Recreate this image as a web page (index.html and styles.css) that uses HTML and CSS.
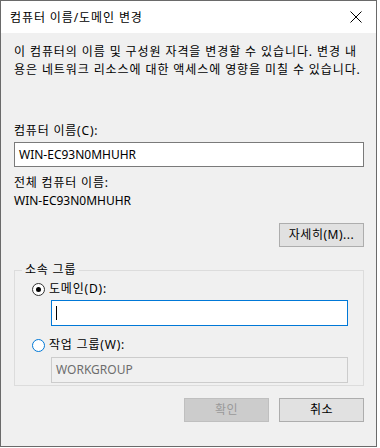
FILE: index.html
```html
<!DOCTYPE html>
<html lang="ko">
<head>
  <meta charset="UTF-8">
  <title>컴퓨터 이름/도메인 변경</title>
  <link rel="stylesheet" href="styles.css">
</head>
<body>

<div class="window">
  <div class="titlebar">
    <span class="title">컴퓨터 이름/도메인 변경</span>
    <svg class="close" width="12" height="12" viewBox="0 0 12 12">
      <path d="M0.5 0.5 L11.5 11.5 M11.5 0.5 L0.5 11.5" stroke="#000" stroke-width="1" fill="none"/>
    </svg>
  </div>

  <div class="content">
    <p class="desc">이 컴퓨터의 이름 및 구성원 자격을 변경할 수 있습니다. 변경 내<br>용은 네트워크 리소스에 대한 액세스에 영향을 미칠 수 있습니다.</p>

    <div class="label name-label">컴퓨터 이름(C):</div>
    <div class="textbox latin">WIN-EC93N0MHUHR</div>

    <div class="label full-label">전체 컴퓨터 이름:</div>
    <div class="label latin">WIN-EC93N0MHUHR</div>

    <div class="row-right more-row">
      <div class="btn">자세히(M)...</div>
    </div>

    <fieldset class="group">
      <legend>소속 그룹</legend>
      <div class="radio-row">
        <span class="radio checked"></span>
        <span>도메인(D):</span>
      </div>
      <div class="textbox sub focus"><span class="caret"></span></div>
      <div class="radio-row second">
        <span class="radio hover"></span>
        <span>작업 그룹(W):</span>
      </div>
      <div class="textbox sub disabled latin">WORKGROUP</div>
    </fieldset>

    <div class="row-right footer">
      <div class="btn off">확인</div>
      <div class="btn">취소</div>
    </div>
  </div>
</div>

</body>
</html>
```

FILE: styles.css
```css
/* Base */
body {
  margin: 0;
  background: #ffffff;
  font-family: "Noto Sans", "Noto Sans CJK KR", sans-serif;
  font-size: 12px;
  letter-spacing: 0.8px;
  color: #000;
}

.latin {
  letter-spacing: 0;
}

.window {
  width: 375px;
  height: 445px;
  border: 1px solid #6a6a6a;
  background: #f0f0f0;
  display: flex;
  flex-direction: column;
}

.titlebar {
  height: 32px;
  background: #ffffff;
  display: flex;
  align-items: center;
  justify-content: space-between;
  padding: 0 9px 0 9px;
}

.title {
  font-size: 12px;
  line-height: 16px;
  margin-top: 1px;
  letter-spacing: 0.9px;
}

.close {
  margin-right: 5px;
}

.content {
  padding: 10px 12px 0 13px;
}

.desc {
  margin: 0;
  line-height: 18px;
  letter-spacing: 0.9px;
}

.label {
  line-height: 18px;
}

.name-label {
  margin-top: 43px;
}

.textbox {
  height: 23px;
  border: 1px solid #7a7a7a;
  background: #fff;
  line-height: 23px;
  padding-left: 4px;
  margin-top: 2px;
}

.full-label {
  margin-top: 7px;
}

.row-right {
  display: flex;
  justify-content: flex-end;
  gap: 10px;
}

.more-row {
  margin-top: 13px;
}

.btn {
  width: 83px;
  height: 22px;
  border: 1px solid #adadad;
  background: #e1e1e1;
  line-height: 22px;
  text-align: center;
  letter-spacing: 0.5px;
}

.btn.off {
  background: #cccccc;
  border-color: #bfbfbf;
  color: #9a9a9a;
}

/* Group box */
.group {
  margin: 14px 0 0 0;
  padding: 0 15px 13px 36px;
  border: 1px solid #dcdcdc;
  height: 110px;
}

.group legend {
  padding: 0 3px;
  margin-left: -29px;
  line-height: 18px;
}

.radio-row {
  display: flex;
  align-items: center;
  gap: 4px;
  margin-left: -19px;
  line-height: 18px;
  margin-top: 1px;
}

.radio-row.second {
  margin-top: 10px;
}

.radio {
  width: 11px;
  height: 11px;
  border: 1px solid #333;
  border-radius: 50%;
  background: #fff;
  position: relative;
}

.radio.checked::after {
  content: "";
  position: absolute;
  left: 3px;
  top: 3px;
  width: 5px;
  height: 5px;
  border-radius: 50%;
  background: #000;
}

.radio.hover {
  border-color: #0078d7;
}

.textbox.sub {
  margin-top: 2px;
  height: 24px;
  line-height: 24px;
}

.textbox.focus {
  border-color: #0078d7;
  display: flex;
  align-items: center;
}

.caret {
  width: 1px;
  height: 14px;
  background: #000;
}

.textbox.disabled {
  background: #f0f0f0;
  border-color: #cccccc;
  color: #6d6d6d;
  margin-top: 3px;
}

.footer {
  margin-top: 12px;
}
```
